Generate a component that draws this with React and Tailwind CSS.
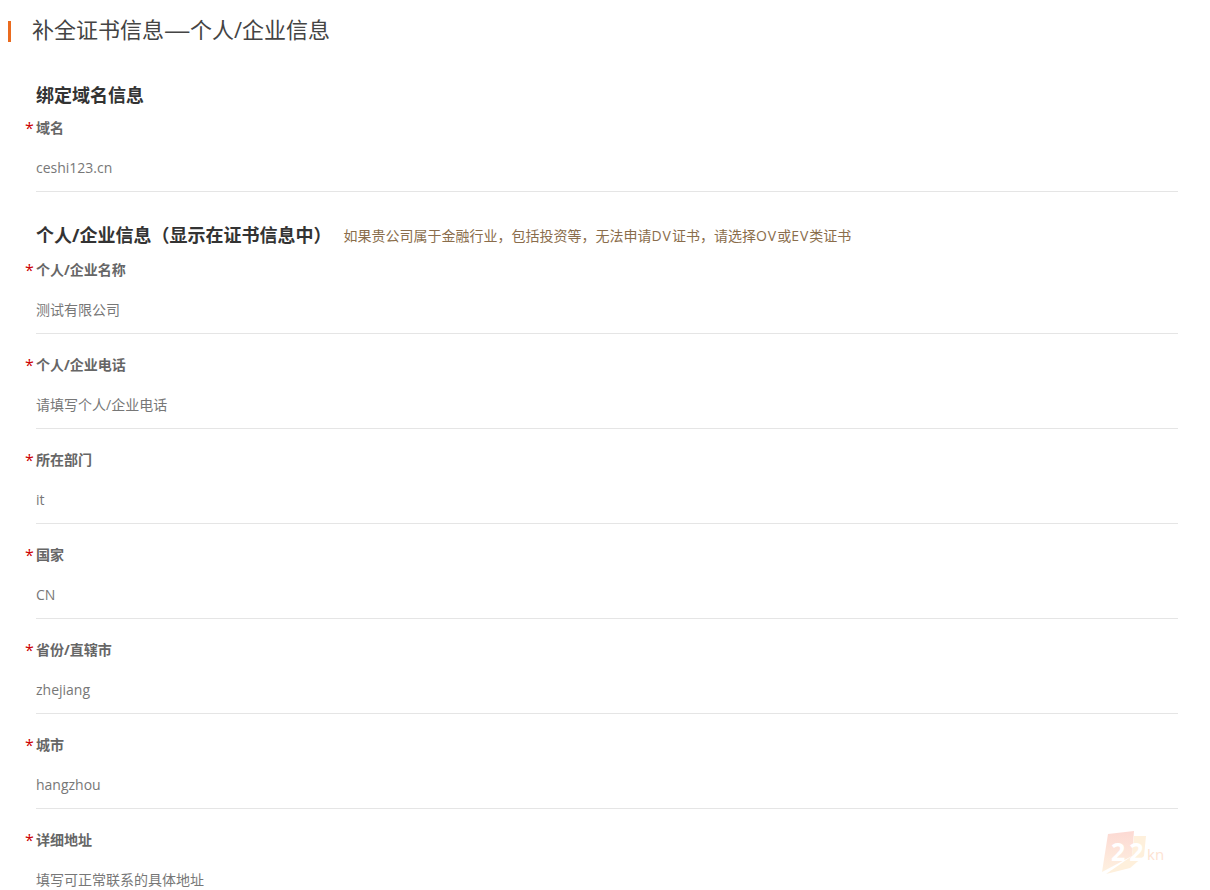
const FONT = "font-['Open_Sans','Noto_Sans_CJK_SC',sans-serif]";

const ROWS = [
  { label: "个人/企业电话", value: "请填写个人/企业电话" },
  { label: "所在部门", value: "it" },
  { label: "国家", value: "CN" },
  { label: "省份/直辖市", value: "zhejiang" },
  { label: "城市", value: "hangzhou" },
  { label: "详细地址", value: "填写可正常联系的具体地址" },
];

function Field({ label, value, className = "" }) {
  return (
    <div className={className}>
      <div className="relative h-5 text-sm leading-5 font-bold text-[#666]">
        <span className="absolute -left-[11px] -top-[2px] text-base font-normal text-[#cc0000]">*</span>
        {label}
      </div>
      <div className="h-[54px] border-b border-[#e5e5e5] pt-5 text-sm leading-5 text-[#777]">{value}</div>
    </div>
  );
}

function Watermark() {
  return (
    <div className="pointer-events-none absolute left-[1098px] top-[828px] h-[50px] w-[76px]">
      <svg viewBox="0 0 76 50" className="absolute inset-0 h-full w-full">
        <defs>
          <linearGradient id="wm" x1="0" y1="0" x2="0" y2="1">
            <stop offset="0" stopColor="#fcd9d3" />
            <stop offset="1" stopColor="#fef1e0" />
          </linearGradient>
        </defs>
        <path d="M36 8 L48 8 L46 28 L32 40 L8 46 L34 28 Z" fill="#fef0dc" />
        <path d="M10 6 L36 3 L34 28 L4 44 Z" fill="url(#wm)" />
      </svg>
      <span className="absolute left-[13px] top-[9px] text-[25px] leading-7 font-bold tracking-[4px] text-white">22</span>
      <span className="absolute left-[49px] top-[18px] text-[15px] leading-4 text-[#fde3d2]">kn</span>
    </div>
  );
}

export default function App() {
  return (
    <div className={`relative h-[890px] overflow-hidden bg-white ${FONT}`}>
      <div className="flex h-[60px] items-start pt-[14px] pl-2">
        <span className="mt-[7px] h-[21px] w-[3px] bg-[#ea6b1f]" />
        <h1 className="ml-[21px] text-[22px] leading-[30px] font-normal text-[#444]">
          补全证书信息<span className="mr-1 inline-block origin-left scale-x-[1.2]">—</span>个人/企业信息
        </h1>
      </div>

      <div className="mr-8 ml-9">
        <h2 className="mt-5 h-[30px] text-lg leading-[30px] font-bold text-[#333]">绑定域名信息</h2>
        <Field className="mt-2" label="域名" value="ceshi123.cn" />

        <div className="mt-7 flex h-[30px] items-start">
          <h2 className="text-lg leading-[30px] font-bold text-[#333]">个人/企业信息（显示在证书信息中）</h2>
          <span className="mt-px ml-3 self-center text-sm text-[#8a6d4b]">
            如果贵公司属于金融行业，包括投资等，无法申请<span className="tracking-[1px]">DV</span>证书，请选择
            <span className="tracking-[1px]">OV</span>或<span className="tracking-[1px]">EV</span>类证书
          </span>
        </div>
        <Field className="mt-[10px]" label="个人/企业名称" value="测试有限公司" />
        {ROWS.map((row) => (
          <Field key={row.label} className="mt-[21px]" label={row.label} value={row.value} />
        ))}
      </div>

      <Watermark />
    </div>
  );
}
